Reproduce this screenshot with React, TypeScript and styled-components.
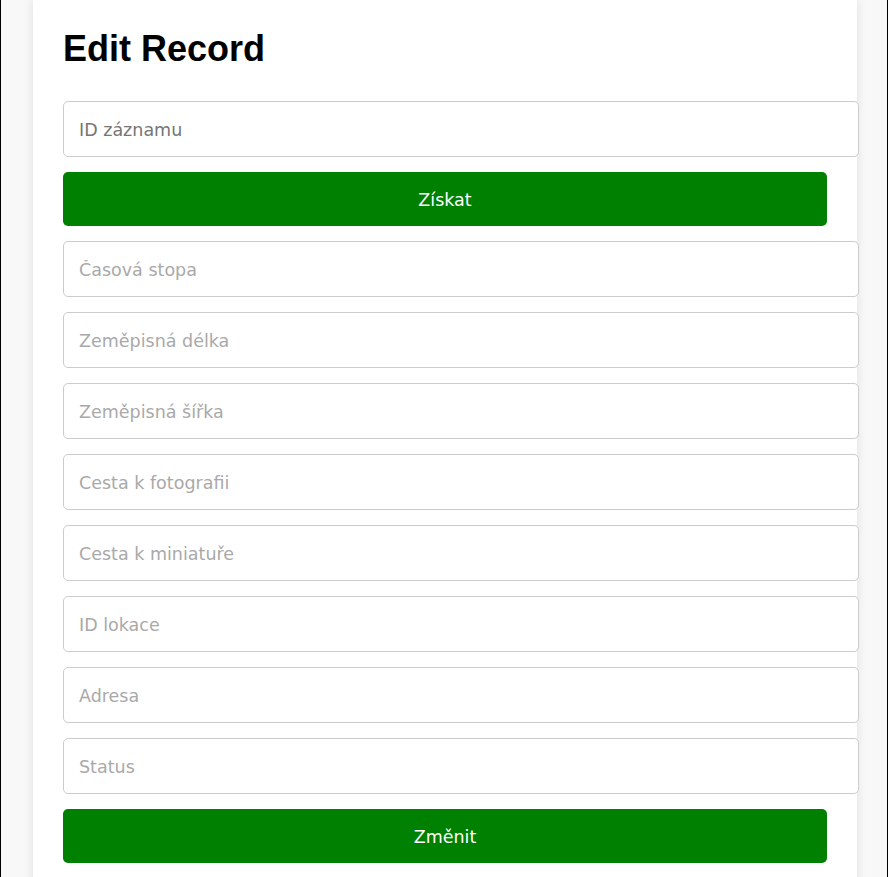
import React from 'react';
import styled, { createGlobalStyle } from 'styled-components';

const GlobalStyle = createGlobalStyle`
  html, body {
    margin: 0;
    padding: 0;
    background: #fff;
  }
`;

const Page = styled.div`
  width: 888px;
  min-height: 877px;
  border: 1px solid #000;
  border-top: none;
  box-sizing: border-box;
  background: #f8f8f8;
  padding: 0 30px 0 32px;
  overflow: hidden;
`;

const Card = styled.div`
  background: #fff;
  box-shadow: 0 0 10px rgba(0, 0, 0, 0.1);
  padding: 29px 30px 30px;
  min-height: 877px;
  box-sizing: border-box;
`;

const Title = styled.h1`
  font-family: 'Liberation Sans', Arial, sans-serif;
  font-size: 36px;
  font-weight: 700;
  line-height: 40px;
  color: #000;
  margin: 0 0 32px 0;
`;

const Form = styled.form`
  display: flex;
  flex-direction: column;
  gap: 15px;
`;

const Input = styled.input<{ $dark?: boolean }>`
  display: block;
  width: 100%;
  height: 24px;
  padding: 16px 15px 14px;
  border: 1px solid #ccc;
  border-radius: 5px;
  font-family: 'DejaVu Sans', Tahoma, Verdana, sans-serif;
  font-size: 17.5px;
  line-height: 24px;
  color: #333;
  background: #fff;
  outline: none;

  &::placeholder {
    color: ${(p) => (p.$dark ? '#757575' : '#a9a9a9')};
  }
`;

const Button = styled.button`
  display: block;
  width: 100%;
  height: 54px;
  padding: 2px 0 0;
  border: none;
  border-radius: 5px;
  background: #008000;
  color: #fff;
  font-family: 'DejaVu Sans', Tahoma, Verdana, sans-serif;
  font-size: 17.5px;
  cursor: pointer;
`;

const fields = [
  'Časová stopa',
  'Zeměpisná délka',
  'Zeměpisná šířka',
  'Cesta k fotografii',
  'Cesta k miniatuře',
  'ID lokace',
  'Adresa',
  'Status',
];

export default function App() {
  return (
    <>
      <GlobalStyle />
      <Page>
        <Card>
          <Title>Edit Record</Title>
          <Form onSubmit={(e) => e.preventDefault()}>
            <Input $dark type="number" placeholder="ID záznamu" />
            <Button type="button">Získat</Button>
            {fields.map((f) => (
              <Input key={f} type="text" placeholder={f} />
            ))}
            <Button type="submit">Změnit</Button>
          </Form>
        </Card>
      </Page>
    </>
  );
}
